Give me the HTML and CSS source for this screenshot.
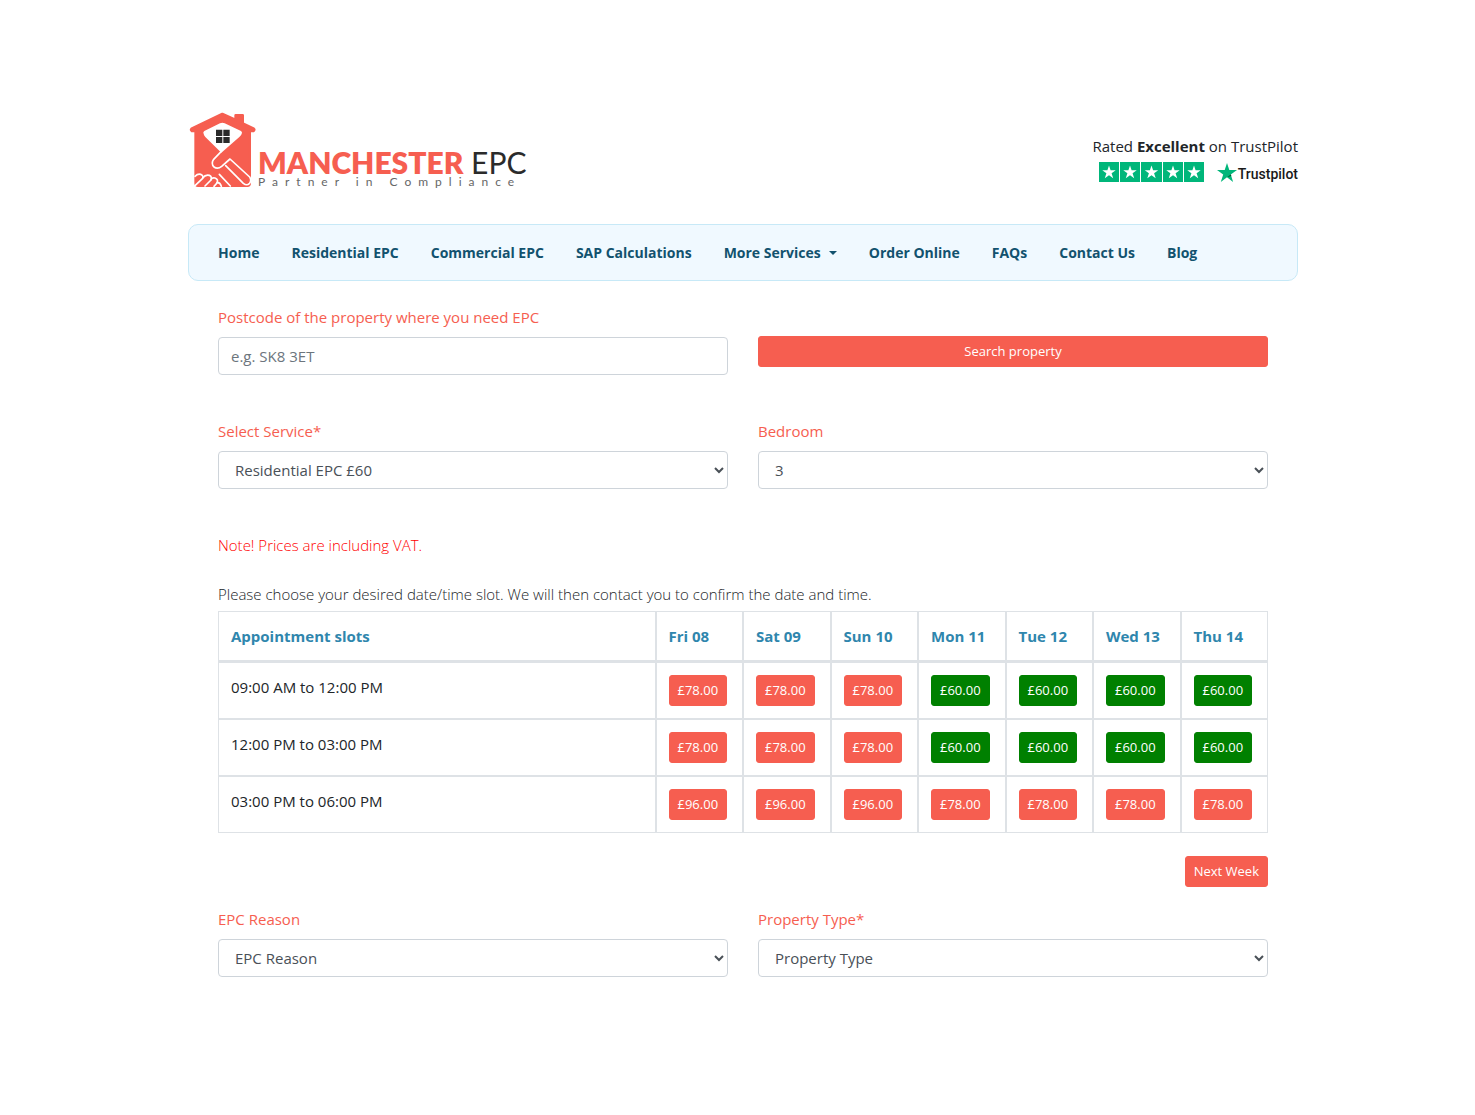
FILE: index.html
```html
<!DOCTYPE html>
<html lang="en">
<head>
  <meta charset="UTF-8">
  <meta name="viewport" content="width=device-width, initial-scale=1">
  <title>Manchester EPC - Order Online</title>
  <link rel="stylesheet" href="styles.css">
</head>
<body>
  <div class="container">
    <header class="header">
      <a class="logo" href="#">
        <svg class="logo-house" viewBox="27 36 204 228" aria-hidden="true">
          <path fill="#f65e50" stroke="#f65e50" stroke-width="8" stroke-linejoin="round" d="M127 42 L167 60 V46 H188 V70 L221 86 Q225 90 220 93 H209 V250 Q209 257 202 257 H54 Q47 257 47 250 V93 H36 Q31 90 35 86 Z"/>
          <path fill="#fff" d="M127 68 Q130 68 134 70 L183 93 Q188 96 185 102 Q183 107 178 111 L124 158 L76 111 Q72 107 71 102 Q68 96 73 93 L120 70 Q124 68 127 68 Z"/>
          <path fill="#2b2b2b" d="M108 89 h19 v19 h-19 z M130 89 h19 v19 h-19 z M108 111 h19 v18 h-19 z M130 111 h19 v18 h-19 z"/>
          <g fill="none" stroke="#fff" stroke-width="5" stroke-linecap="round" stroke-linejoin="round">
            <path d="M124 154 L101 178 Q92 191 102 201 Q113 209 125 199 L150 177 L209 231 Q216 241 208 251 Q200 258 190 250 L137 197"/>
            <path d="M118 223 L151 258"/>
            <path d="M45 229 Q56 218 67 226 Q71 230 68 235 L45 257"/>
            <path d="M68 234 Q76 223 88 226 Q97 231 93 240 L75 258"/>
            <path d="M93 239 Q96 232 105 234 Q116 238 111 249 L102 259"/>
            <path d="M111 248 Q120 246 124 259"/>
          </g>
        </svg>
        <span class="logo-text">
          <span class="logo-name"><b>MANCHESTER</b> EPC</span>
          <span class="logo-tagline">Partner in Compliance</span>
        </span>
      </a>
      <div class="rating">
        <div>Rated <strong>Excellent</strong> on TrustPilot</div>
        <div class="rating-row">
          <svg class="stars" viewBox="0 0 105 20" role="img" aria-label="5 stars">
            <defs>
              <path id="star" d="M0 -7 L1.6 -2.2 H6.7 L2.6 .8 L4.2 5.7 L0 2.7 L-4.2 5.7 L-2.6 .8 L-6.7 -2.2 H-1.6 Z"/>
            </defs>
            <path fill="#00b67a" d="M0 0 h20 v20 h-20 z M21 0 h20 v20 h-20 z M42 0 h21 v20 h-21 z M64 0 h20 v20 h-20 z M85 0 h20 v20 h-20 z"/>
            <g fill="#fff">
              <use href="#star" x="10" y="10.500"/>
              <use href="#star" x="31" y="10.500"/>
              <use href="#star" x="52.500" y="10.500"/>
              <use href="#star" x="74" y="10.500"/>
              <use href="#star" x="95" y="10.500"/>
            </g>
          </svg>
          <a class="trustpilot" href="#">
            <svg class="trustpilot-star" viewBox="0 0 20 19" aria-hidden="true">
              <path fill="#00b67a" d="M10 0 L12.300 7 H20 L13.800 11.400 L16.100 19 L10 14.300 L3.800 19 L6.200 11.400 L0 7 H7.700 Z"/>
              <path fill="#005128" d="M14.300 13 L13.800 11.400 L10 14.300 Z"/>
            </svg>
            <span>Trustpilot</span>
          </a>
        </div>
      </div>
    </header>

    <nav class="navbar">
      <a href="#">Home</a>
      <a href="#">Residential EPC</a>
      <a href="#">Commercial EPC</a>
      <a href="#">SAP Calculations</a>
      <a class="dropdown-toggle" href="#">More Services</a>
      <a href="#">Order Online</a>
      <a href="#">FAQs</a>
      <a href="#">Contact Us</a>
      <a href="#">Blog</a>
    </nav>

    <form class="order-form">
      <div class="row">
        <div class="form-group">
          <label for="postcode">Postcode of the property where you need EPC</label>
          <input class="form-control" type="text" id="postcode" placeholder="e.g. SK8 3ET">
        </div>
        <div class="form-group search-group">
          <button class="btn" type="button">Search property</button>
        </div>
      </div>

      <div class="row">
        <div class="form-group">
          <label for="service">Select Service*</label>
          <select class="form-control" id="service">
            <option>Residential EPC £60</option>
          </select>
        </div>
        <div class="form-group">
          <label for="bedroom">Bedroom</label>
          <select class="form-control" id="bedroom">
            <option>3</option>
          </select>
        </div>
      </div>

      <p class="note">Note! Prices are including VAT.</p>
      <p class="slots-intro">Please choose your desired date/time slot. We will then contact you to confirm the date and time.</p>

      <table class="slots">
        <thead>
          <tr>
            <th class="slot-time" scope="col">Appointment slots</th>
            <th scope="col">Fri 08</th>
            <th scope="col">Sat 09</th>
            <th scope="col">Sun 10</th>
            <th scope="col">Mon 11</th>
            <th scope="col">Tue 12</th>
            <th scope="col">Wed 13</th>
            <th scope="col">Thu 14</th>
          </tr>
        </thead>
        <tbody>
          <tr>
            <td>09:00 AM to 12:00 PM</td>
            <td><button class="btn" type="button">£78.00</button></td>
            <td><button class="btn" type="button">£78.00</button></td>
            <td><button class="btn" type="button">£78.00</button></td>
            <td><button class="btn btn-green" type="button">£60.00</button></td>
            <td><button class="btn btn-green" type="button">£60.00</button></td>
            <td><button class="btn btn-green" type="button">£60.00</button></td>
            <td><button class="btn btn-green" type="button">£60.00</button></td>
          </tr>
          <tr>
            <td>12:00 PM to 03:00 PM</td>
            <td><button class="btn" type="button">£78.00</button></td>
            <td><button class="btn" type="button">£78.00</button></td>
            <td><button class="btn" type="button">£78.00</button></td>
            <td><button class="btn btn-green" type="button">£60.00</button></td>
            <td><button class="btn btn-green" type="button">£60.00</button></td>
            <td><button class="btn btn-green" type="button">£60.00</button></td>
            <td><button class="btn btn-green" type="button">£60.00</button></td>
          </tr>
          <tr>
            <td>03:00 PM to 06:00 PM</td>
            <td><button class="btn" type="button">£96.00</button></td>
            <td><button class="btn" type="button">£96.00</button></td>
            <td><button class="btn" type="button">£96.00</button></td>
            <td><button class="btn" type="button">£78.00</button></td>
            <td><button class="btn" type="button">£78.00</button></td>
            <td><button class="btn" type="button">£78.00</button></td>
            <td><button class="btn" type="button">£78.00</button></td>
          </tr>
        </tbody>
      </table>

      <div class="week-nav">
        <button class="btn" type="button">Next Week</button>
      </div>

      <div class="row">
        <div class="form-group">
          <label for="reason">EPC Reason</label>
          <select class="form-control" id="reason">
            <option>EPC Reason</option>
          </select>
        </div>
        <div class="form-group">
          <label for="propertyType">Property Type*</label>
          <select class="form-control" id="propertyType">
            <option>Property Type</option>
          </select>
        </div>
      </div>
    </form>
  </div>
</body>
</html>
```
FILE: styles.css
```css
* {
  box-sizing: border-box;
}

body {
  margin: 0;
  padding: 112px 0 0 11px;
  font-family: "Segoe UI", "Open Sans", "Noto Sans", sans-serif;
  font-size: 15px;
  line-height: 24px;
  color: #212529;
  background-color: #fff;
}

.container {
  max-width: 1110px;
  margin: 0 auto;
}

/* header */
.header {
  display: flex;
  justify-content: space-between;
  align-items: flex-end;
  margin-bottom: 36px;
}

.logo {
  display: flex;
  align-items: flex-end;
  gap: 1px;
  padding-left: 1px;
  color: #2b2b2b;
  text-decoration: none;
}

.logo-house {
  width: 68px;
  height: 76px;
}

.logo-text {
  display: flex;
  flex-direction: column;
  font-family: Lato, sans-serif;
}

.logo-name {
  font-size: 30px;
  line-height: 26px;
}

.logo-name b {
  font-weight: 800;
  color: #f65e50;
}

.logo-tagline {
  font-size: 12px;
  line-height: 13px;
  letter-spacing: 7px;
  margin-right: -7px;
  color: #666;
}

.rating {
  text-align: right;
  padding-bottom: 6px;
}

.rating-row {
  display: flex;
  justify-content: flex-end;
  align-items: center;
  gap: 13px;
  margin-top: 4px;
}

.stars {
  width: 105px;
  height: 20px;
}

.trustpilot {
  display: flex;
  align-items: center;
  gap: 1px;
  height: 20px;
  font-family: Roboto, Arial, sans-serif;
  font-size: 14px;
  font-weight: 500;
  color: #191919;
  text-decoration: none;
}

.trustpilot span {
  padding-top: 4px;
}

.trustpilot-star {
  width: 20px;
  height: 19px;
}

/* navigation */
.navbar {
  display: flex;
  flex-wrap: wrap;
  gap: 32px;
  padding: 16px 29px 15px;
  background-color: #f0f9ff;
  border: 1px solid #c7e9f7;
  border-radius: 10px;
}

.navbar a {
  font-size: 14px;
  font-weight: 700;
  color: #12526e;
  text-decoration: none;
}

.dropdown-toggle::after {
  content: "";
  display: inline-block;
  margin-left: 8px;
  vertical-align: 3px;
  border-top: 4px solid;
  border-left: 4px solid transparent;
  border-right: 4px solid transparent;
}

/* order form */
.order-form {
  padding: 24px 30px;
}

.row {
  display: grid;
  grid-template-columns: 1fr 1fr;
  gap: 30px;
  margin-bottom: 44px;
}

label {
  display: block;
  margin-bottom: 8px;
  color: #f65e50;
}

.form-control {
  display: block;
  width: 100%;
  height: 38px;
  padding: 6px 12px;
  font-family: inherit;
  font-size: 15px;
  line-height: 24px;
  color: #495057;
  background-color: #fff;
  border: 1px solid #ced4da;
  border-radius: 4px;
}

.form-control::placeholder {
  color: #6c757d;
}

.btn {
  padding: 4px 8px;
  font-family: inherit;
  font-size: 13px;
  line-height: 21px;
  color: #fff;
  background-color: #f65e50;
  border: 1px solid #f65e50;
  border-radius: 3px;
  cursor: pointer;
}

.btn-green {
  background-color: green;
  border-color: green;
}

.search-group {
  padding-top: 31px;
}

.search-group .btn {
  display: block;
  width: 100%;
}

.note,
.slots-intro {
  margin: 0;
  font-weight: 300;
}

.note {
  margin-bottom: 25px;
  color: red;
}

.slots-intro {
  margin-bottom: 5px;
}

/* appointment slots */
.slots {
  width: 100%;
  table-layout: fixed;
  border-collapse: separate;
  border-spacing: 0;
  margin-bottom: 23px;
}

.slots th,
.slots td {
  padding: 12px;
  text-align: left;
  vertical-align: top;
  border: 1px solid #dee2e6;
}

.slots th {
  border-bottom-width: 2px;
  color: #2f86ad;
  white-space: nowrap;
}

.slots .slot-time {
  width: 41.6667%;
}

.slots .btn {
  display: block;
}

.week-nav {
  display: flex;
  justify-content: flex-end;
  margin-bottom: 20px;
}
```
